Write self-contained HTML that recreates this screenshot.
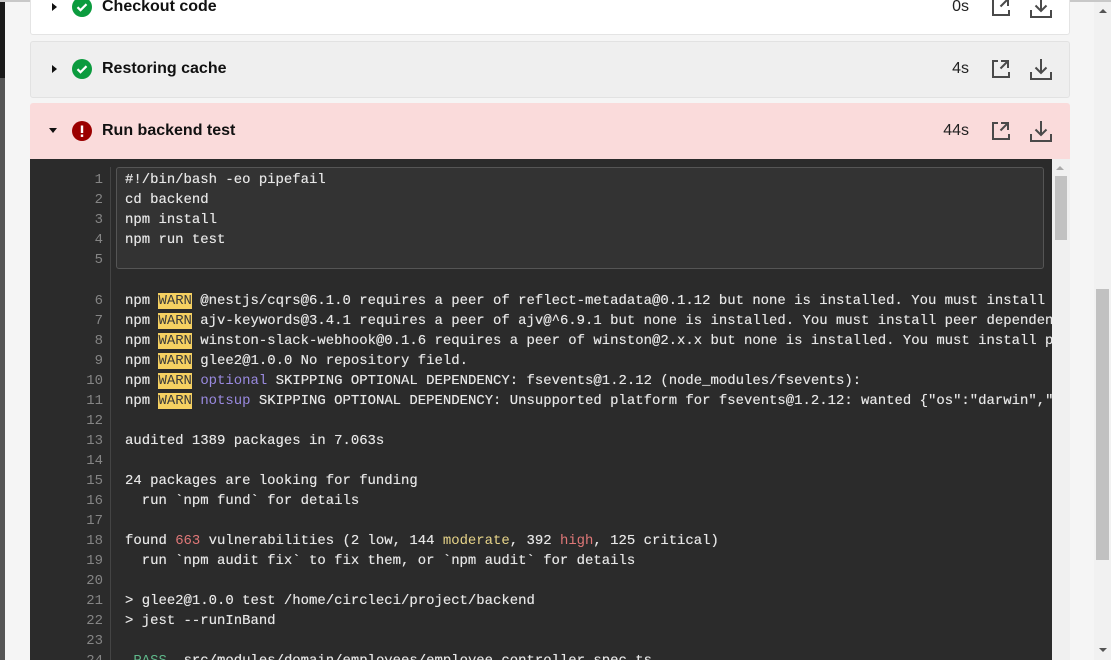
<!DOCTYPE html>
<html><head><meta charset="utf-8"><style>
*{margin:0;padding:0;box-sizing:border-box}
html,body{width:1111px;height:660px;overflow:hidden}
body{background:#f5f5f5;position:relative;font-family:"Liberation Sans",sans-serif}
.abs{position:absolute}
.card{position:absolute;left:30px;width:1040px;border-radius:3px}
.title{position:absolute;left:102px;font-weight:bold;font-size:16px;color:#111}
.time{position:absolute;right:142px;font-size:16px;color:#222;text-align:right}
.mono{font-family:"Liberation Mono",monospace;font-size:13.95px;color:#e6e6e6;white-space:pre;line-height:20px;text-shadow:0 0 0.4px #e6e6e6}
.ln{position:absolute;left:60px;width:43px;text-align:right;color:#858585;font-family:"Liberation Mono",monospace;font-size:13.95px;line-height:20px}
.tx{position:absolute;left:125px}
.w{background:#f5d061;color:#3a3a3a;text-shadow:none}
.p{color:#9a8ae0;text-shadow:none}
.r{color:#e07878;text-shadow:none}
.y{color:#e8d58a;text-shadow:none}
</style></head><body>
<div class="abs" style="left:0;top:0;width:5px;height:78px;background:#1a1a1a"></div>
<div class="abs" style="left:0;top:78px;width:5px;height:582px;background:#555"></div>
<div class="abs" style="left:0;top:0;width:1111px;height:2px;background:#c8c8c8"></div>

<div class="card" style="top:-22px;height:57px;background:#fff;border:1px solid #e4e4e4"></div>
<div class="abs" style="left:52px;top:3px;width:0;height:0;border-top:4px solid transparent;border-bottom:4px solid transparent;border-left:5px solid #111"></div>
<svg class="abs" style="left:72px;top:-3px" width="20" height="20" viewBox="0 0 20 20"><circle cx="10" cy="10" r="10" fill="#0b9b3e"/><path d="M5.5 10.2l3 3 6-6" stroke="#fff" stroke-width="2.2" fill="none"/></svg>
<div class="title" style="top:-2px">Checkout code</div>
<div class="time" style="top:-2px">0s</div>

<div class="card" style="top:41px;height:57px;background:#efefef;border:1px solid #e2e2e2"></div>
<div class="abs" style="left:52px;top:65px;width:0;height:0;border-top:4px solid transparent;border-bottom:4px solid transparent;border-left:5px solid #111"></div>
<svg class="abs" style="left:72px;top:59px" width="20" height="20" viewBox="0 0 20 20"><circle cx="10" cy="10" r="10" fill="#0b9b3e"/><path d="M5.5 10.2l3 3 6-6" stroke="#fff" stroke-width="2.2" fill="none"/></svg>
<div class="title" style="top:60px">Restoring cache</div>
<div class="time" style="top:60px">4s</div>

<div class="card" style="top:103px;height:57px;background:#fadbdb;border-radius:3px 3px 0 0"></div>
<div class="abs" style="left:49px;top:128px;width:0;height:0;border-left:4px solid transparent;border-right:4px solid transparent;border-top:5px solid #111"></div>
<svg class="abs" style="left:72px;top:121px" width="20" height="20" viewBox="0 0 20 20"><circle cx="10" cy="10" r="10" fill="#9b0000"/><rect x="8.8" y="4.5" width="2.4" height="7.5" fill="#fff"/><rect x="8.8" y="13.5" width="2.4" height="2.4" fill="#fff"/></svg>
<div class="title" style="top:122px">Run backend test</div>
<div class="time" style="top:122px">44s</div>

<svg class="abs" style="left:985px;top:0" width="70" height="160" viewBox="0 0 70 160">
<defs><g id="ic" fill="none" stroke="#4a4a4a" stroke-width="2">
<path d="M13 0h-5v16h16v-5"/><path d="M16 0h7v7"/><path d="M22.5 0.5l-7 7"/>
<path d="M56 -2v14"/><path d="M50.5 6.5l5.5 5.5 5.5-5.5"/><path d="M66 11v7h-20v-7"/>
</g></defs>
<use href="#ic" y="-1"/>
<use href="#ic" y="61"/>
<use href="#ic" y="123"/>
</svg>

<div class="abs" style="left:30px;top:159px;width:1022px;height:501px;background:#2b2b2b"></div>
<div class="abs" style="left:110px;top:167px;width:1px;height:493px;background:#444"></div>
<div class="abs" style="left:116px;top:167px;width:928px;height:102px;background:#333;border:1px solid #555;border-radius:3px"></div>
<div class="abs" style="left:1052px;top:159px;width:18px;height:501px;background:#f0f0f0"></div>
<div class="abs" style="left:1055px;top:176px;width:12px;height:64px;background:#c2c2c2"></div>
<div class="abs" style="left:1056px;top:166px;width:0;height:0;border-left:4px solid transparent;border-right:4px solid transparent;border-bottom:4px solid #aaa"></div>
<div class="abs" style="left:1094px;top:2px;width:17px;height:658px;background:#f1f1f1"></div>
<div class="abs" style="left:1096px;top:289px;width:13px;height:271px;background:#c1c1c1"></div>
<div class="abs" style="left:1099px;top:9px;width:0;height:0;border-left:4px solid transparent;border-right:4px solid transparent;border-bottom:4px solid #555"></div>
<div class="abs" style="left:1099px;top:648px;width:0;height:0;border-left:4px solid transparent;border-right:4px solid transparent;border-top:4px solid #555"></div>

<div class="ln" style="top:170px">1<br>2<br>3<br>4<br>5</div>
<div class="mono tx" style="top:170px">#!/bin/bash -eo pipefail
cd backend
npm install
npm run test
</div>
<div class="ln" style="top:291px">6<br>7<br>8<br>9<br>10<br>11<br>12<br>13<br>14<br>15<br>16<br>17<br>18<br>19<br>20<br>21<br>22<br>23<br>24</div>
<div class="abs" style="left:116px;top:159px;width:936px;height:501px;overflow:hidden"><div class="mono" style="position:absolute;left:9px;top:132px">npm <span class="w">WARN</span> @nestjs/cqrs@6.1.0 requires a peer of reflect-metadata@0.1.12 but none is installed. You must install peer dependencies yourself.
npm <span class="w">WARN</span> ajv-keywords@3.4.1 requires a peer of ajv@^6.9.1 but none is installed. You must install peer dependencies yourself.
npm <span class="w">WARN</span> winston-slack-webhook@0.1.6 requires a peer of winston@2.x.x but none is installed. You must install peer dependencies.
npm <span class="w">WARN</span> glee2@1.0.0 No repository field.
npm <span class="w">WARN</span> <span class="p">optional</span> SKIPPING OPTIONAL DEPENDENCY: fsevents@1.2.12 (node_modules/fsevents):
npm <span class="w">WARN</span> <span class="p">notsup</span> SKIPPING OPTIONAL DEPENDENCY: Unsupported platform for fsevents@1.2.12: wanted {"os":"darwin","arch":"any"}

audited 1389 packages in 7.063s

24 packages are looking for funding
  run `npm fund` for details

found <span class="r">663</span> vulnerabilities (2 low, 144 <span class="y">moderate</span>, 392 <span class="r">high</span>, 125 critical)
  run `npm audit fix` to fix them, or `npm audit` for details

&gt; glee2@1.0.0 test /home/circleci/project/backend
&gt; jest --runInBand

 <span style="color:#5fb88a;text-shadow:none">PASS</span>  src/modules/domain/employees/employee.controller.spec.ts</div></div>
</body></html>
